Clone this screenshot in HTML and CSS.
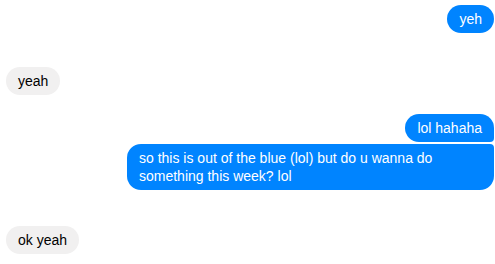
FILE: index.html
```html
<!DOCTYPE html>
<html>
<head>
<meta charset="utf-8">
<link rel="stylesheet" href="styles.css">
</head>
<body>
<div class="thread">
  <div class="msg out single m-yeh">yeh</div>
  <div class="msg in single m-yeah">yeah</div>
  <div class="msg out first m-lol">lol hahaha</div>
  <div class="msg out last m-big">so this is out of the blue (lol) but do u wanna do something this week? lol</div>
  <div class="msg in single m-ok">ok yeah</div>
</div>
</body>
</html>
```
FILE: styles.css
```css
html, body {
  margin: 0;
  padding: 0;
  background: #ffffff;
}
.thread {
  display: flex;
  flex-direction: column;
  padding: 5px 1px 0 6px;
  font-family: "Liberation Sans", Arial, sans-serif;
  font-size: 14px;
  line-height: 18px;
}
.msg {
  max-width: 343px;
  padding: 5px 12px;
  border-radius: 14px;
}
.out {
  align-self: flex-end;
  background: #0084ff;
  color: #ffffff;
}
.in {
  align-self: flex-start;
  background: #f1f0f0;
  color: #000000;
}
.out.first {
  border-bottom-right-radius: 4px;
}
.out.last {
  border-top-right-radius: 4px;
}
.m-yeah { margin-top: 34px; }
.m-lol { margin-top: 19px; }
.m-big { margin-top: 2px; }
.m-ok { margin-top: 36px; }
```
